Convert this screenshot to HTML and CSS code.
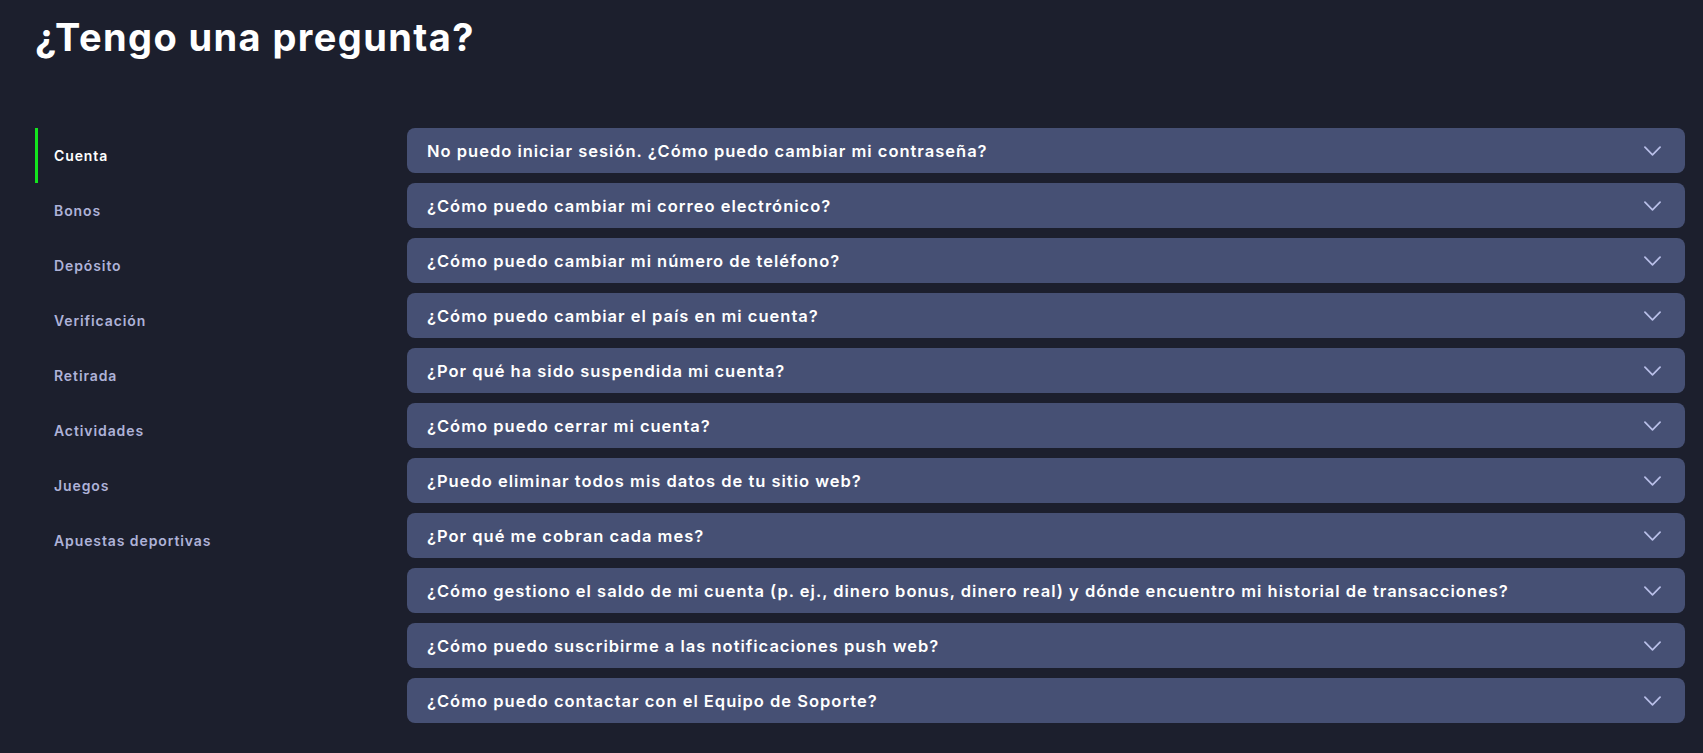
FILE: index.html
```html
<!DOCTYPE html>
<html lang="es">
<head>
    <meta charset="UTF-8">
    <meta name="viewport" content="width=device-width, initial-scale=1.0">
    <title>¿Tengo una pregunta?</title>
    <link rel="stylesheet" href="styles.css">
</head>
<body>
    <div class="page">
        <h1 class="title">¿Tengo una pregunta?</h1>

        <div class="faq">
            <ul class="categories">
                <li class="category active">Cuenta</li>
                <li class="category">Bonos</li>
                <li class="category">Depósito</li>
                <li class="category">Verificación</li>
                <li class="category">Retirada</li>
                <li class="category">Actividades</li>
                <li class="category">Juegos</li>
                <li class="category">Apuestas deportivas</li>
            </ul>

            <div class="questions">
                <div class="question"><span>No puedo iniciar sesión. ¿Cómo puedo cambiar mi contraseña?</span><svg class="chevron" viewBox="0 0 18 10"><path d="M1 1l8 8 8-8"/></svg></div>
                <div class="question"><span>¿Cómo puedo cambiar mi correo electrónico?</span><svg class="chevron" viewBox="0 0 18 10"><path d="M1 1l8 8 8-8"/></svg></div>
                <div class="question"><span>¿Cómo puedo cambiar mi número de teléfono?</span><svg class="chevron" viewBox="0 0 18 10"><path d="M1 1l8 8 8-8"/></svg></div>
                <div class="question"><span>¿Cómo puedo cambiar el país en mi cuenta?</span><svg class="chevron" viewBox="0 0 18 10"><path d="M1 1l8 8 8-8"/></svg></div>
                <div class="question"><span>¿Por qué ha sido suspendida mi cuenta?</span><svg class="chevron" viewBox="0 0 18 10"><path d="M1 1l8 8 8-8"/></svg></div>
                <div class="question"><span>¿Cómo puedo cerrar mi cuenta?</span><svg class="chevron" viewBox="0 0 18 10"><path d="M1 1l8 8 8-8"/></svg></div>
                <div class="question"><span>¿Puedo eliminar todos mis datos de tu sitio web?</span><svg class="chevron" viewBox="0 0 18 10"><path d="M1 1l8 8 8-8"/></svg></div>
                <div class="question"><span>¿Por qué me cobran cada mes?</span><svg class="chevron" viewBox="0 0 18 10"><path d="M1 1l8 8 8-8"/></svg></div>
                <div class="question"><span>¿Cómo gestiono el saldo de mi cuenta (p. ej., dinero bonus, dinero real) y dónde encuentro mi historial de transacciones?</span><svg class="chevron" viewBox="0 0 18 10"><path d="M1 1l8 8 8-8"/></svg></div>
                <div class="question"><span>¿Cómo puedo suscribirme a las notificaciones push web?</span><svg class="chevron" viewBox="0 0 18 10"><path d="M1 1l8 8 8-8"/></svg></div>
                <div class="question"><span>¿Cómo puedo contactar con el Equipo de Soporte?</span><svg class="chevron" viewBox="0 0 18 10"><path d="M1 1l8 8 8-8"/></svg></div>
            </div>
        </div>
    </div>
</body>
</html>
```

FILE: styles.css
```css
* {
    margin: 0;
    padding: 0;
    box-sizing: border-box;
}

body {
    font-family: Inter, 'Noto Sans', sans-serif;
    background: #1c1f2d;
    color: #ffffff;
    min-height: 100vh;
}

.page {
    padding: 14px 18px 30px 35px;
}

.title {
    font-size: 38px;
    font-weight: 700;
    letter-spacing: 1.4px;
    line-height: 46px;
    margin-bottom: 68px;
}

.faq {
    display: flex;
    align-items: flex-start;
}

.categories {
    list-style: none;
    width: 372px;
    flex-shrink: 0;
}

.category {
    height: 55px;
    display: flex;
    align-items: center;
    padding-left: 16px;
    border-left: 3px solid transparent;
    color: #aeb2d8;
    font-size: 14px;
    font-weight: 600;
    letter-spacing: 0.9px;
}

.category.active {
    color: #ffffff;
    border-left-color: #13e51e;
}

.questions {
    flex: 1;
    display: flex;
    flex-direction: column;
    gap: 10px;
}

.question {
    height: 45px;
    background: #465074;
    border-radius: 8px;
    display: flex;
    align-items: center;
    justify-content: space-between;
    padding: 0 24px 0 20px;
    font-size: 16.5px;
    font-weight: 600;
    letter-spacing: 1px;
    cursor: pointer;
}

.chevron {
    width: 17px;
    height: 10px;
    fill: none;
    stroke: #b9bfe8;
    stroke-width: 1.8;
    stroke-linecap: round;
    stroke-linejoin: round;
}
```
